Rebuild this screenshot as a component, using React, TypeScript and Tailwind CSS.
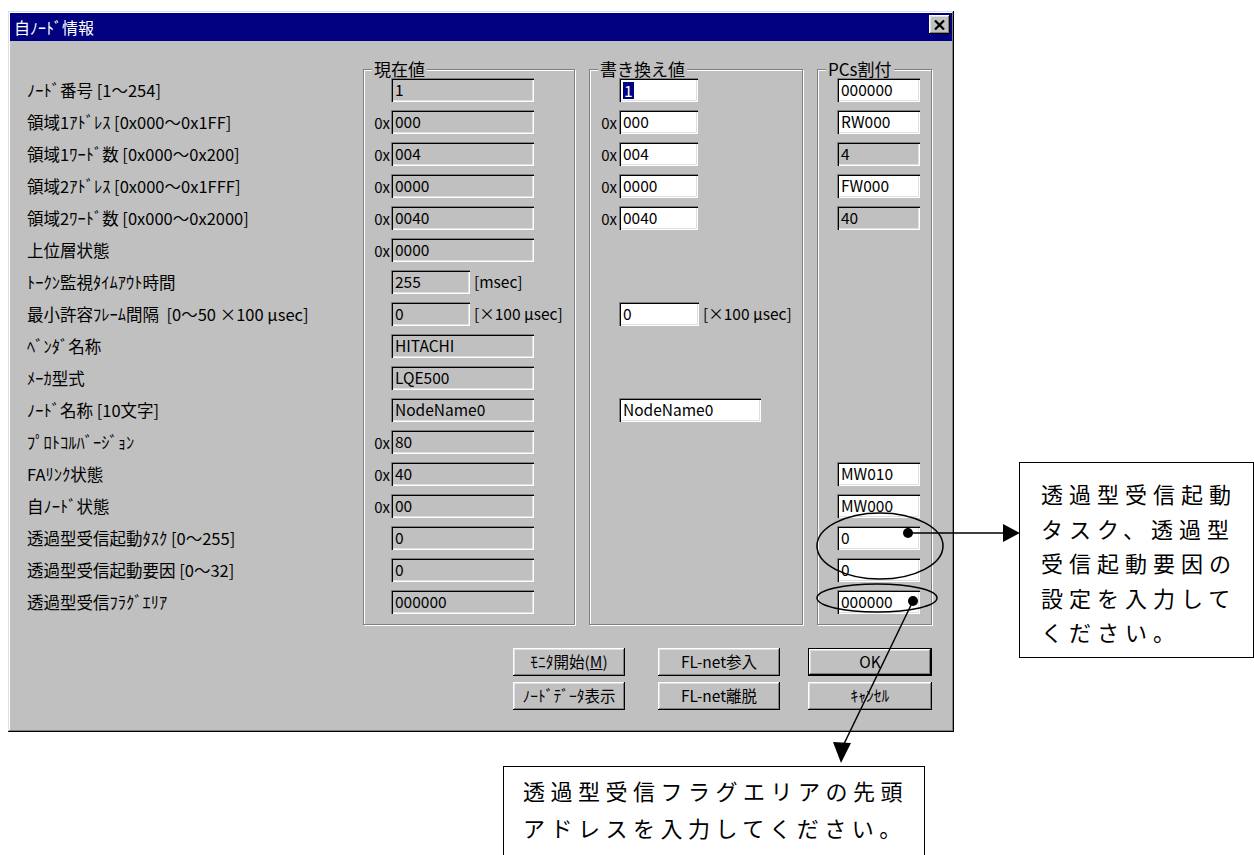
import React from 'react';

type Cell = {
  prefix?: string;
  value: string;
  enabled?: boolean;
  selected?: boolean;
  size?: 'short' | 'long' | 'normal';
  suffix?: string;
} | null;

type Row = { label: string; c1: Cell; c2: Cell; c3: Cell };

const rows: Row[] = [
  { label: 'ﾉｰﾄﾞ番号 [1～254]', c1: { value: '1' }, c2: { value: '1', enabled: true, selected: true }, c3: { value: '000000', enabled: true } },
  { label: '領域1ｱﾄﾞﾚｽ [0x000～0x1FF]', c1: { prefix: '0x', value: '000' }, c2: { prefix: '0x', value: '000', enabled: true }, c3: { value: 'RW000', enabled: true } },
  { label: '領域1ﾜｰﾄﾞ数 [0x000～0x200]', c1: { prefix: '0x', value: '004' }, c2: { prefix: '0x', value: '004', enabled: true }, c3: { value: '4' } },
  { label: '領域2ｱﾄﾞﾚｽ [0x000～0x1FFF]', c1: { prefix: '0x', value: '0000' }, c2: { prefix: '0x', value: '0000', enabled: true }, c3: { value: 'FW000', enabled: true } },
  { label: '領域2ﾜｰﾄﾞ数 [0x000～0x2000]', c1: { prefix: '0x', value: '0040' }, c2: { prefix: '0x', value: '0040', enabled: true }, c3: { value: '40' } },
  { label: '上位層状態', c1: { prefix: '0x', value: '0000' }, c2: null, c3: null },
  { label: 'ﾄｰｸﾝ監視ﾀｲﾑｱｳﾄ時間', c1: { value: '255', size: 'short', suffix: '[msec]' }, c2: null, c3: null },
  { label: '最小許容ﾌﾚｰﾑ間隔  [0～50 ×100 μsec]', c1: { value: '0', size: 'short', suffix: '[×100 μsec]' }, c2: { value: '0', enabled: true, suffix: '[×100 μsec]' }, c3: null },
  { label: 'ﾍﾞﾝﾀﾞ名称', c1: { value: 'HITACHI' }, c2: null, c3: null },
  { label: 'ﾒｰｶ型式', c1: { value: 'LQE500' }, c2: null, c3: null },
  { label: 'ﾉｰﾄﾞ名称 [10文字]', c1: { value: 'NodeName0' }, c2: { value: 'NodeName0', enabled: true, size: 'long' }, c3: null },
  { label: 'ﾌﾟﾛﾄｺﾙﾊﾞｰｼﾞｮﾝ', c1: { prefix: '0x', value: '80' }, c2: null, c3: null },
  { label: 'FAﾘﾝｸ状態', c1: { prefix: '0x', value: '40' }, c2: null, c3: { value: 'MW010', enabled: true } },
  { label: '自ﾉｰﾄﾞ状態', c1: { prefix: '0x', value: '00' }, c2: null, c3: { value: 'MW000', enabled: true } },
  { label: '透過型受信起動ﾀｽｸ [0～255]', c1: { value: '0' }, c2: null, c3: { value: '0', enabled: true } },
  { label: '透過型受信起動要因 [0～32]', c1: { value: '0' }, c2: null, c3: { value: '0', enabled: true } },
  { label: '透過型受信ﾌﾗｸﾞｴﾘｱ', c1: { value: '000000' }, c2: null, c3: { value: '000000', enabled: true } },
];

const SUNKEN =
  'shadow-[inset_1px_1px_0_#808080,inset_2px_2px_0_#000,inset_-1px_-1px_0_#fff,inset_-2px_-2px_0_#dfdfdf]';
const RAISED =
  'shadow-[inset_-1px_-1px_0_#000,inset_1px_1px_0_#fff,inset_-2px_-2px_0_#808080,inset_2px_2px_0_#dfdfdf]';

function Field({ value, enabled, selected, className }: { value: string; enabled?: boolean; selected?: boolean; className: string }) {
  return (
    <div
      className={`h-[24px] flex items-center pl-[4px] text-[15.5px] leading-none text-black whitespace-nowrap overflow-hidden ${
        enabled ? 'bg-white' : 'bg-[#c0c0c0]'
      } ${SUNKEN} ${className}`}
    >
      {selected ? <span className="bg-[#000080] text-white leading-[17px] px-[1px]">{value}</span> : value}
    </div>
  );
}

function GroupBox({ title, className, children }: { title: string; className: string; children: React.ReactNode }) {
  return (
    <div className={`relative border border-[#808080] shadow-[inset_1px_1px_0_#fff,1px_1px_0_#fff] pt-[4px] pb-[6px] ${className}`}>
      <div className="absolute left-[8px] top-[-10px] bg-[#c0c0c0] px-[2px] text-[17px] leading-[17px] text-black whitespace-nowrap">
        {title}
      </div>
      {children}
    </div>
  );
}

function Btn({ children, def, className }: { children: React.ReactNode; def?: boolean; className: string }) {
  return (
    <div className={`h-[28px] ${def ? 'border border-black' : ''} ${className}`}>
      <div className={`h-full w-full flex items-center justify-center text-[15.5px] text-black bg-[#c0c0c0] ${RAISED}`}>{children}</div>
    </div>
  );
}

export default function App() {
  return (
    <div className="relative w-[1254px] h-[855px] bg-white overflow-hidden font-['Noto_Sans_CJK_JP','Noto_Sans',sans-serif] text-black">
      {/* Dialog window */}
      <div className="ml-[8px] mt-[11px] w-[946px] h-[721px] bg-[#c0c0c0] p-[2px] shadow-[inset_-1px_-1px_0_#000,inset_1px_1px_0_#dfdfdf,inset_-2px_-2px_0_#808080,inset_2px_2px_0_#fff] flex flex-col">
        {/* Title bar */}
        <div className="h-[28px] bg-[#000080] flex items-start justify-between pl-[4px] pr-[2px]">
          <div className="text-white text-[16px] leading-[28px] whitespace-nowrap">自ﾉｰﾄﾞ情報</div>
          <div className={`mt-[2px] w-[21px] h-[19px] bg-[#c0c0c0] flex items-center justify-center ${RAISED}`}>
            <svg width="11" height="10" viewBox="0 0 11 10">
              <path d="M1 0.5 L10 9.5 M10 0.5 L1 9.5" stroke="#000" strokeWidth="2.2" />
            </svg>
          </div>
        </div>

        {/* Body */}
        <div className="flex flex-col pl-[17px] pt-[28px]">
          <div className="flex items-start">
            {/* Labels */}
            <div className="w-[336px] mt-[5px] flex flex-col">
              {rows.map((r, i) => (
                <div key={i} className="h-[32px] flex items-center text-[16.5px] whitespace-pre leading-none">
                  {r.label}
                </div>
              ))}
            </div>

            {/* 現在値 */}
            <GroupBox title="現在値" className="w-[212px]">
              {rows.map((r, i) => {
                const c = r.c1;
                return (
                  <div key={i} className="h-[32px] flex items-center">
                    <div className="w-[27px] text-right pr-[1px] text-[15px] leading-none">{c?.prefix ?? ''}</div>
                    {c && (
                      <>
                        <Field value={c.value} enabled={c.enabled} className={c.size === 'short' ? 'w-[79px]' : 'w-[143px]'} />
                        {c.suffix && <div className="ml-[4px] text-[15.5px] whitespace-pre leading-none">{c.suffix}</div>}
                      </>
                    )}
                  </div>
                );
              })}
            </GroupBox>

            {/* 書き換え値 */}
            <GroupBox title="書き換え値" className="ml-[14px] w-[214px]">
              {rows.map((r, i) => {
                const c = r.c2;
                return (
                  <div key={i} className="h-[32px] flex items-center">
                    <div className="w-[29px] text-right pr-[2px] text-[15px] leading-none">{c?.prefix ?? ''}</div>
                    {c && (
                      <>
                        <Field
                          value={c.value}
                          enabled={c.enabled}
                          selected={c.selected}
                          className={c.size === 'long' ? 'w-[142px]' : c.suffix ? 'w-[80px]' : 'w-[79px]'}
                        />
                        {c.suffix && <div className="ml-[4px] text-[15.5px] whitespace-pre leading-none">{c.suffix}</div>}
                      </>
                    )}
                  </div>
                );
              })}
            </GroupBox>

            {/* PCs割付 */}
            <GroupBox title="PCs割付" className="ml-[14px] w-[115px]">
              {rows.map((r, i) => {
                const c = r.c3;
                return (
                  <div key={i} className="h-[32px] flex items-center pl-[19px]">
                    {c && <Field value={c.value} enabled={c.enabled} className="w-[83px]" />}
                  </div>
                );
              })}
            </GroupBox>
          </div>

          {/* Buttons */}
          <div className="mt-[23px] flex flex-col gap-[6px] pl-[486px]">
            <div className="flex">
              <Btn className="w-[112px]">
                ﾓﾆﾀ開始(<span className="underline">M</span>)
              </Btn>
              <Btn className="ml-[33px] w-[122px]">FL-net参入</Btn>
              <Btn def className="ml-[28px] w-[124px]">OK</Btn>
            </div>
            <div className="flex">
              <Btn className="w-[112px]">ﾉｰﾄﾞﾃﾞｰﾀ表示</Btn>
              <Btn className="ml-[33px] w-[122px]">FL-net離脱</Btn>
              <Btn className="ml-[28px] w-[124px]">ｷｬﾝｾﾙ</Btn>
            </div>
          </div>
        </div>
      </div>

      {/* Annotation drawing */}
      <svg className="absolute left-0 top-0 pointer-events-none" width="1254" height="855" viewBox="0 0 1254 855">
        <ellipse cx="880" cy="546" rx="63" ry="33" fill="none" stroke="#000" strokeWidth="1.5" />
        <ellipse cx="877" cy="598" rx="60" ry="14" fill="none" stroke="#000" strokeWidth="1.5" />
        <circle cx="908" cy="533" r="5" fill="#000" />
        <line x1="908" y1="533" x2="1004" y2="533" stroke="#000" strokeWidth="1.5" />
        <polygon points="1003,524 1003,542 1020,533" fill="#000" />
        <circle cx="913" cy="601" r="5" fill="#000" />
        <line x1="913" y1="601" x2="842" y2="748" stroke="#000" strokeWidth="1.5" />
        <polygon points="833,742 851,743 841,763" fill="#000" />
      </svg>

      {/* Callout right */}
      <div className="absolute left-[1019px] top-[462px] w-[235px] h-[196px] bg-white border border-black pl-[21px] pt-[13px] text-[22px] leading-[34.5px] tracking-[6px]">
        <div>透過型受信起動</div>
        <div>タスク、透過型</div>
        <div>受信起動要因の</div>
        <div>設定を入力して</div>
        <div>ください。</div>
      </div>

      {/* Callout bottom */}
      <div className="absolute left-[503px] top-[766px] w-[422px] h-[100px] bg-white border border-black pl-[19px] pt-[5px] text-[22px] leading-[37px] tracking-[5.5px]">
        <div>透過型受信フラグエリアの先頭</div>
        <div>アドレスを入力してください。</div>
      </div>
    </div>
  );
}
